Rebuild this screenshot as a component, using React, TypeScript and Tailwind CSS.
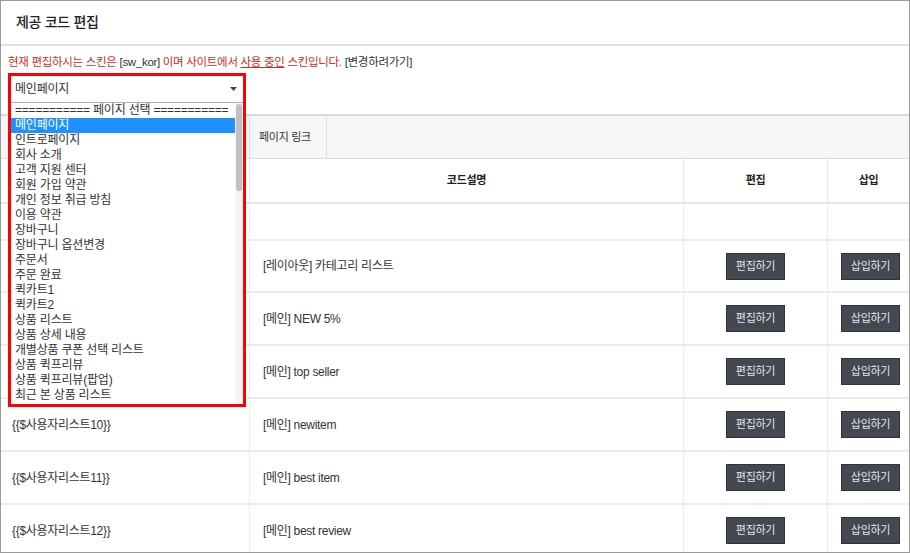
const pages = [
  '메인페이지',
  '인트로페이지',
  '회사 소개',
  '고객 지원 센터',
  '회원 가입 약관',
  '개인 정보 취급 방침',
  '이용 약관',
  '장바구니',
  '장바구니 옵션변경',
  '주문서',
  '주문 완료',
  '퀵카트1',
  '퀵카트2',
  '상품 리스트',
  '상품 상세 내용',
  '개별상품 쿠폰 선택 리스트',
  '상품 퀵프리뷰',
  '상품 퀵프리뷰(팝업)',
  '최근 본 상품 리스트',
]

// first three code cells sit under the open dropdown
const rows = [
  { code: '', desc: '[레이아웃] 카테고리 리스트' },
  { code: '', desc: '[메인] NEW 5%' },
  { code: '', desc: '[메인] top seller' },
  { code: '{{$사용자리스트10}}', desc: '[메인] newitem' },
  { code: '{{$사용자리스트11}}', desc: '[메인] best item' },
  { code: '{{$사용자리스트12}}', desc: '[메인] best review' },
]

function DarkButton({ label }: { label: string }) {
  return (
    <button className="w-[59px] h-[27px] bg-[#434851] border border-[#2f333a] text-[#e6e6e6] text-[11px] tracking-[-0.3px]">
      {label}
    </button>
  )
}

export default function App() {
  return (
    <div className="w-[910px] h-[553px] overflow-hidden border border-[#9a9a9a] bg-white text-[#333] font-['Liberation_Sans','Noto_Sans_CJK_KR',sans-serif]">
      {/* Title */}
      <div className="h-[45px] flex items-center pl-[15px] border-b-2 border-[#e2e2e2]">
        <h1 className="text-[14px] tracking-[-0.3px] text-[#222] font-medium">제공 코드 편집</h1>
      </div>

      {/* Notice + page select */}
      <div className="px-[7px] pt-[8px]">
        <p className="h-[16px] leading-[16px] text-[11.5px] tracking-[-0.3px] text-[#d62a20]">
          현재 편집하시는 스킨은 <span className="text-[#333]">[sw_kor]</span> 이며 사이트에서{' '}
          <span className="underline">사용 중인</span> 스킨입니다.{' '}
          <span className="text-[#333]">[변경하려가기]</span>
        </p>
        <div className="relative h-[41px] mt-[3px]">
          <div className="absolute left-0 top-0 z-10 w-[238px] h-[334px] border-[3px] border-[#ff0000] bg-white flex flex-col">
            <div className="h-[26px] flex items-center justify-between pl-[4px] pr-[6px] text-[12px] tracking-[-0.2px]">
              <span>메인페이지</span>
              <svg width="7" height="4" viewBox="0 0 7 4">
                <path d="M0 0h7L3.5 4z" fill="#444" />
              </svg>
            </div>
            <div className="flex-1 flex border-t border-[#9fb3d6] overflow-hidden">
              <ul className="flex-1 text-[12px] tracking-[-0.2px] leading-[15px]">
                <li className="pl-[4px]">=========== 페이지 선택 ===========</li>
                {pages.map((p, i) => (
                  <li key={p} className={i === 0 ? 'pl-[4px] bg-[#1e90ff] text-white' : 'pl-[4px]'}>
                    {p}
                  </li>
                ))}
              </ul>
              <div className="w-[8px] bg-[#f4f4f4] pt-[1px] flex justify-center">
                <div className="w-[6px] h-[87px] rounded-[3px] bg-[#c1c1c1]" />
              </div>
            </div>
          </div>
        </div>
      </div>

      {/* Table */}
      <div className="text-[12px] tracking-[-0.3px]">
        <div className="grid grid-cols-[249px_77px_1fr] h-[44px] bg-[#f6f6f6] border-t-2 border-[#dadada]">
          <div className="border-r border-[#dcdcdc]" />
          <div className="border-r border-[#dcdcdc] flex items-center pl-[9px] text-[11px]">페이지 링크</div>
          <div />
        </div>
        <div className="grid grid-cols-[249px_434px_144px_1fr] h-[44px] border-t border-[#dcdcdc] font-bold text-[#222] text-[11px]">
          <div className="border-r border-[#e8e8e8]" />
          <div className="border-r border-[#e8e8e8] flex items-center justify-center">코드설명</div>
          <div className="border-r border-[#e8e8e8] flex items-center justify-center">편집</div>
          <div className="flex items-center justify-center">삽입</div>
        </div>
        <div className="grid grid-cols-[249px_434px_144px_1fr] h-[37px] border-t-2 border-[#e6e6e6]">
          <div className="border-r border-[#ececec]" />
          <div className="border-r border-[#ececec]" />
          <div className="border-r border-[#ececec]" />
          <div />
        </div>
        {rows.map((r, i) => (
          <div
            key={r.desc}
            className={`grid grid-cols-[249px_434px_144px_1fr] border-t-2 border-[#ececec] ${i === 0 ? 'h-[52px]' : 'h-[53px]'}`}
          >
            <div className="border-r border-[#ececec] flex items-center pl-[11px]">{r.code}</div>
            <div className="border-r border-[#ececec] flex items-center pl-[13px]">{r.desc}</div>
            <div className="border-r border-[#ececec] flex items-center justify-center">
              <DarkButton label="편집하기" />
            </div>
            <div className="flex items-center justify-center pl-[4px]">
              <DarkButton label="삽입하기" />
            </div>
          </div>
        ))}
      </div>
    </div>
  )
}
